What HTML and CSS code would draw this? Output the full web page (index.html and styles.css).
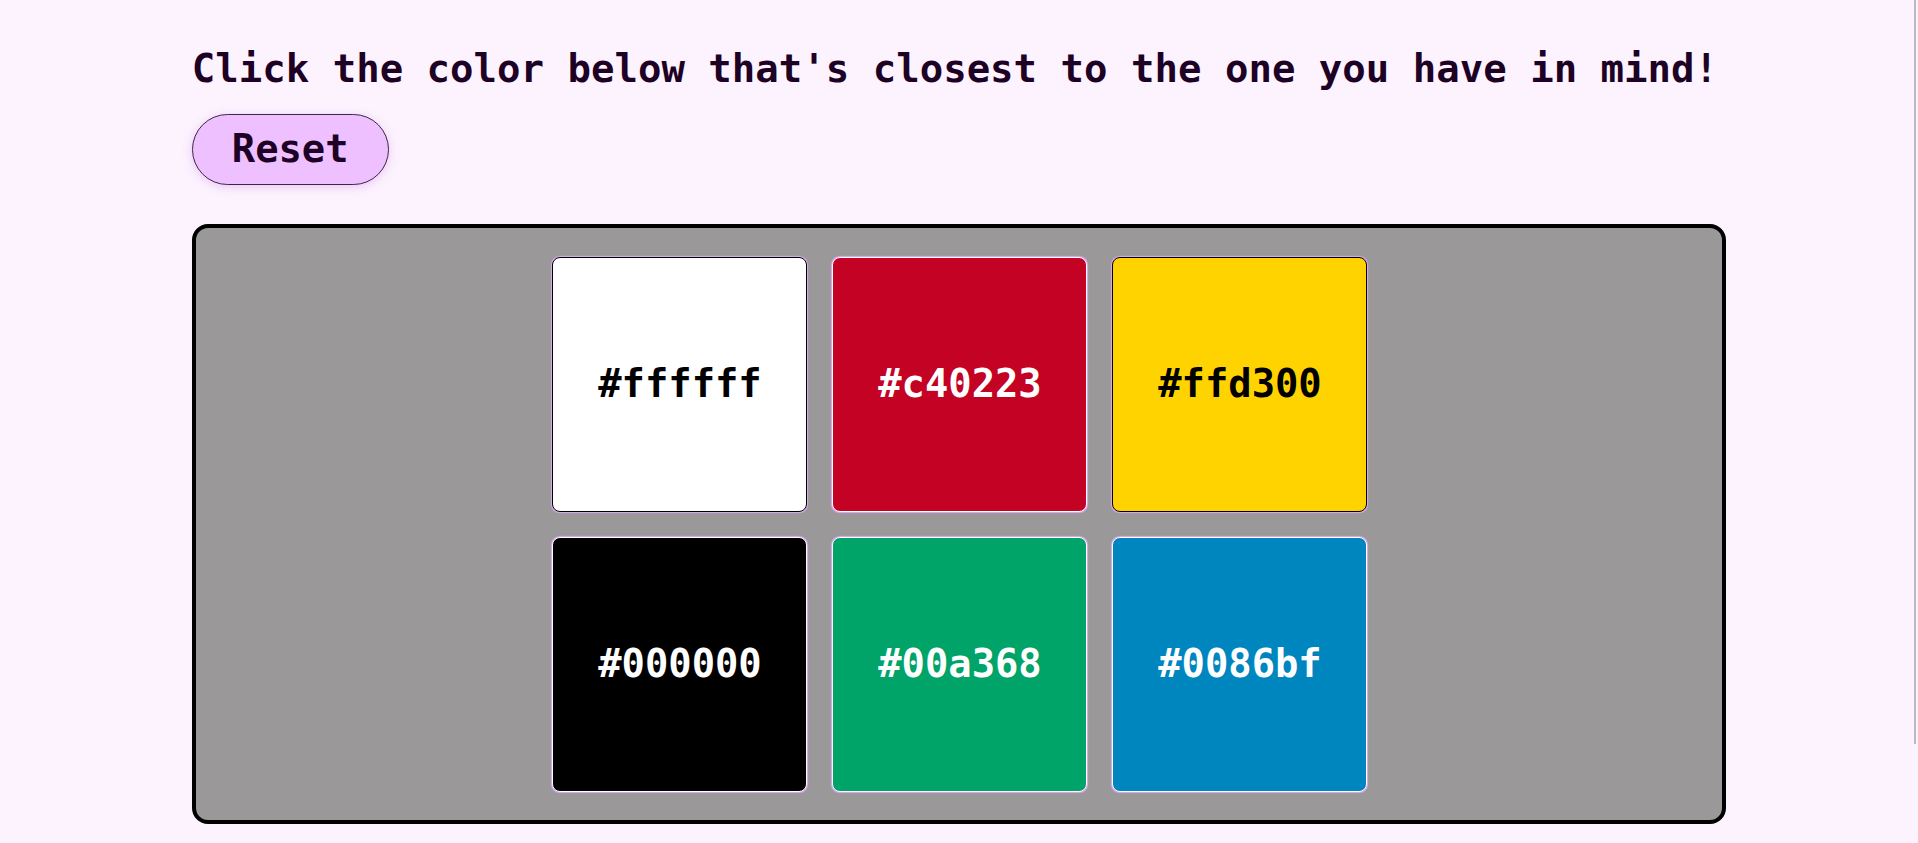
FILE: index.html
```html
<!DOCTYPE html>
<html lang="en">
<head>
<meta charset="utf-8">
<title>Color guesser</title>
<link rel="stylesheet" href="styles.css">
</head>
<body>
<main class="page">
  <h1 class="prompt">Click the color below that's closest to the one you have in mind!</h1>
  <div class="actions">
    <button class="reset" type="button">Reset</button>
  </div>
  <section class="board">
    <div class="grid">
      <button class="swatch swatch-light" type="button" style="background-color:#ffffff">#ffffff</button>
      <button class="swatch swatch-dark" type="button" style="background-color:#c40223">#c40223</button>
      <button class="swatch swatch-light" type="button" style="background-color:#ffd300">#ffd300</button>
      <button class="swatch swatch-dark" type="button" style="background-color:#000000">#000000</button>
      <button class="swatch swatch-dark" type="button" style="background-color:#00a368">#00a368</button>
      <button class="swatch swatch-dark" type="button" style="background-color:#0086bf">#0086bf</button>
    </div>
  </section>
</main>
<div class="scroll-thumb" aria-hidden="true"></div>
</body>
</html>
```

FILE: styles.css
```css
html, body {
  margin: 0;
  padding: 0;
}

body {
  background: #fcf3fe;
  color: #1e0226;
  font-family: "DejaVu Sans Mono", "Liberation Mono", monospace;
  font-weight: 700;
  overflow: hidden;
}

.page {
  width: 80%;
  margin: 0 auto;
  padding-top: 46px;
}

.prompt {
  margin: 0;
  font-size: 39px;
  line-height: 46.56px;
  font-weight: 700;
  white-space: nowrap;
}

.actions {
  margin-top: 21px;
}

.reset {
  font-family: inherit;
  font-weight: 700;
  font-size: 38.8px;
  line-height: 46.56px;
  color: #1e0226;
  background: #efc0ff;
  border: 1px solid #3a2940;
  border-radius: 40px;
  padding: 11.2px 39px;
  box-shadow: 0 2px 10px rgba(214, 140, 240, 0.45);
  cursor: pointer;
}

.board {
  margin-top: 39.5px;
  background: #9a9898;
  border: 4px solid #000;
  border-radius: 16px;
  padding: 28.5px 0;
  display: flex;
  justify-content: center;
}

.grid {
  display: grid;
  grid-template-columns: repeat(3, 255px);
  grid-auto-rows: 255px;
  gap: 25px;
  margin-left: 2px;
}

.swatch {
  display: flex;
  align-items: center;
  justify-content: center;
  box-sizing: border-box;
  width: 255px;
  height: 255px;
  margin: 0;
  padding: 0;
  border-radius: 8px;
  font-family: inherit;
  font-weight: 700;
  font-size: 38.8px;
  line-height: 46.56px;
  cursor: pointer;
  box-shadow: 0 0 1px 0.6px #dcaaf0;
}

.swatch-light {
  color: #000;
  border: 1px solid #000;
}

.swatch-dark {
  color: #fff;
  border: 1px solid #fff;
}

.scroll-thumb {
  position: fixed;
  top: 0;
  right: 2px;
  width: 2px;
  height: 744px;
  background: #bfb7c2;
}
```
